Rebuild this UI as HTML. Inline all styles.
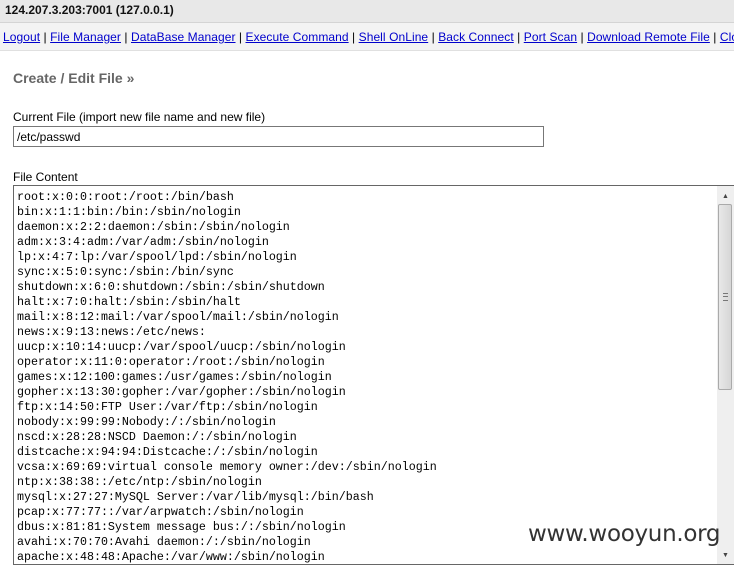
<!DOCTYPE html>
<html><head><style>
body{margin:0;width:734px;height:565px;overflow:hidden;background:#fff;font-family:"Liberation Sans",Arial,sans-serif;font-size:12px;position:relative}
.top{position:absolute;left:0;top:0;width:734px;height:22px;background:#e8e8e8;border-bottom:1px solid #d4d4d4}
.top b{position:absolute;left:5px;top:3px;font-size:12px;color:#111}
.nav{position:absolute;left:0;top:23px;width:734px;height:27px;background:#f3f3f3;border-bottom:1px solid #e0e0e0;white-space:nowrap}
.nav span{position:absolute;left:3px;top:7px;color:#000;letter-spacing:0.07px}
.nav a{color:#0000cc;text-decoration:underline}
h2{position:absolute;left:13px;top:70px;margin:0;font-size:14px;color:#666;font-weight:bold}
.l1{position:absolute;left:13px;top:110px;color:#000}
.inp{position:absolute;left:13px;top:126px;width:531px;height:21px;border:1px solid #777;box-sizing:border-box;}
.inp span{position:absolute;left:3px;top:3px}
.l2{position:absolute;left:13px;top:170px}
.ta{position:absolute;left:13px;top:185px;width:721px;height:380px;border:1px solid #666;border-right:none;box-sizing:border-box;overflow:hidden}
pre{margin:0;position:absolute;left:3px;top:4px;font-family:"Liberation Mono","Courier New",monospace;font-size:11.67px;line-height:15px;color:#000}
.sb{position:absolute;left:703px;top:0;width:17px;height:380px;background:#efefef}
.thumb{position:absolute;left:1px;top:18px;width:14px;height:186px;background:linear-gradient(90deg,#e8e8e8,#d6d6d6);border:1px solid #aaa;box-sizing:border-box;border-radius:2px}
.wm{position:absolute;left:528px;top:521px;font-size:23px;color:#333;font-family:"DejaVu Sans","Liberation Sans",sans-serif;letter-spacing:-0.3px}
</style></head><body>
<div class="top"><b>124.207.3.203:7001 (127.0.0.1)</b></div>
<div class="nav"><span><a>Logout</a> | <a>File Manager</a> | <a>DataBase Manager</a> | <a>Execute Command</a> | <a>Shell OnLine</a> | <a>Back Connect</a> | <a>Port Scan</a> | <a>Download Remote File</a> | <a>Clone</a></span></div>
<h2>Create / Edit File »</h2>
<div class="l1">Current File (import new file name and new file)</div>
<div class="inp"><span>/etc/passwd</span></div>
<div class="l2">File Content</div>
<div class="ta"><pre>root:x:0:0:root:/root:/bin/bash
bin:x:1:1:bin:/bin:/sbin/nologin
daemon:x:2:2:daemon:/sbin:/sbin/nologin
adm:x:3:4:adm:/var/adm:/sbin/nologin
lp:x:4:7:lp:/var/spool/lpd:/sbin/nologin
sync:x:5:0:sync:/sbin:/bin/sync
shutdown:x:6:0:shutdown:/sbin:/sbin/shutdown
halt:x:7:0:halt:/sbin:/sbin/halt
mail:x:8:12:mail:/var/spool/mail:/sbin/nologin
news:x:9:13:news:/etc/news:
uucp:x:10:14:uucp:/var/spool/uucp:/sbin/nologin
operator:x:11:0:operator:/root:/sbin/nologin
games:x:12:100:games:/usr/games:/sbin/nologin
gopher:x:13:30:gopher:/var/gopher:/sbin/nologin
ftp:x:14:50:FTP User:/var/ftp:/sbin/nologin
nobody:x:99:99:Nobody:/:/sbin/nologin
nscd:x:28:28:NSCD Daemon:/:/sbin/nologin
distcache:x:94:94:Distcache:/:/sbin/nologin
vcsa:x:69:69:virtual console memory owner:/dev:/sbin/nologin
ntp:x:38:38::/etc/ntp:/sbin/nologin
mysql:x:27:27:MySQL Server:/var/lib/mysql:/bin/bash
pcap:x:77:77::/var/arpwatch:/sbin/nologin
dbus:x:81:81:System message bus:/:/sbin/nologin
avahi:x:70:70:Avahi daemon:/:/sbin/nologin
apache:x:48:48:Apache:/var/www:/sbin/nologin</pre>
<div class="sb"><div style="position:absolute;left:5px;top:7px;font-size:7px;color:#444">▲</div><div class="thumb"><div style="position:absolute;left:4px;top:88px;width:5px;height:6px;border-top:1px solid #777;border-bottom:1px solid #777"></div><div style="position:absolute;left:4px;top:91px;width:5px;border-top:1px solid #777"></div></div><div style="position:absolute;left:5px;top:366px;font-size:7px;color:#444">▼</div></div>
</div>
<div class="wm">www.wooyun.org</div>
</body></html>
